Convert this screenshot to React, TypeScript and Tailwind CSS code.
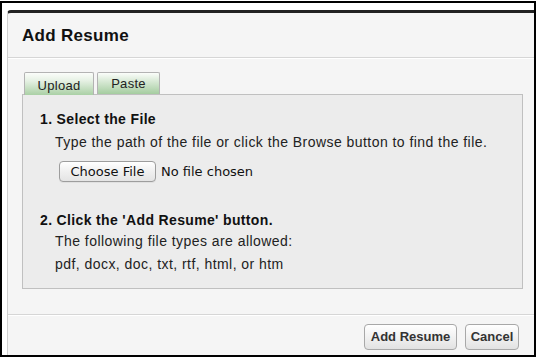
import React from "react";

export default function App() {
  return (
    <div className="w-[536px] h-[357px] bg-white overflow-hidden font-['Liberation_Sans',Arial,sans-serif] text-[#1a1a1a]">
      <div className="w-[536px] h-[356px] mt-px border-2 border-black overflow-hidden pl-[5px] pt-[7px]">
        <div className="w-[540px] h-[400px] bg-[#f5f5f5] border-t-[3px] border-[#222] border-l border-l-[#d0d0d0] rounded-tl-[4px]">
          {/* header */}
          <div className="h-[45px] border-b border-[#d6d6d6] flex items-center pl-[14px] pt-[2px]">
            <h1 className="text-[17px] font-bold text-[#111] tracking-[0.3px]">Add Resume</h1>
          </div>
          <div className="border-t border-white pt-[13px] pl-[14px] pr-[24px]">
            {/* tabs */}
            <div className="flex items-end pl-[2px] gap-[3px] h-[22px] relative z-10">
              <div className="w-[70px] h-[23px] -mb-px border border-[#b3b3b3] border-b-0 rounded-t-[2px] bg-[linear-gradient(to_bottom,#fbfdfa,#e6f1e4_35%,#aad0a5)] flex items-center justify-center pt-[3px] text-[13px] text-[#222] tracking-[0.3px]">
                Upload
              </div>
              <div className="w-[63px] h-[22px] border border-[#b3b3b3] border-b-0 rounded-t-[2px] bg-[linear-gradient(to_bottom,#fbfdfa,#e0eede_30%,#a5cda0)] flex items-center justify-center text-[13px] text-[#222] tracking-[0.3px]">
                Paste
              </div>
            </div>
            {/* panel */}
            <div className="h-[195px] border border-[#c0c0c0] bg-[#ececec] pl-[17px] pt-[14px]">
              <div className="text-[14px] font-bold leading-[20px] text-[#111] tracking-[0.35px]">1. Select the File</div>
              <div className="pl-[15px] text-[14px] leading-[16px] mt-[5px] text-[#222] tracking-[0.45px]">
                Type the path of the file or click the Browse button to find the file.
              </div>
              <div className="pl-[19px] mt-[11px] flex items-center font-['DejaVu_Sans',sans-serif] text-[13px]">
                <div className="w-[97px] h-[21px] rounded-[4px] border border-[#9d9d9d] bg-[linear-gradient(to_bottom,#ffffff,#f0f0f0_50%,#e4e4e4)] flex items-center justify-center text-[#111] shadow-[0_1px_0_rgba(0,0,0,0.05)]">
                  Choose File
                </div>
                <span className="ml-[5px] text-[#111]">No file chosen</span>
              </div>
              <div className="text-[14px] font-bold leading-[20px] mt-[28px] text-[#111] tracking-[0.35px]">2. Click the 'Add Resume' button.</div>
              <div className="pl-[15px] text-[14px] leading-[23px] text-[#222] tracking-[0.45px]">
                <div>The following file types are allowed:</div>
                <div>pdf, docx, doc, txt, rtf, html, or htm</div>
              </div>
            </div>
          </div>
          {/* footer */}
          <div className="mt-[25px] border-t border-[#d6d6d6]">
            <div className="border-t border-white pt-[8px] flex justify-start pl-[356px] gap-[8px]">
              <div className="w-[93px] h-[26px] rounded-[4px] border border-[#a8a8a8] bg-[linear-gradient(to_bottom,#ffffff,#f1f1f1_50%,#e2e2e2)] flex items-center justify-center text-[13px] font-bold text-[#333]">
                Add Resume
              </div>
              <div className="w-[54px] h-[26px] rounded-[4px] border border-[#a8a8a8] bg-[linear-gradient(to_bottom,#ffffff,#f1f1f1_50%,#e2e2e2)] flex items-center justify-center text-[13px] font-bold text-[#333]">
                Cancel
              </div>
            </div>
          </div>
        </div>
      </div>
    </div>
  );
}
